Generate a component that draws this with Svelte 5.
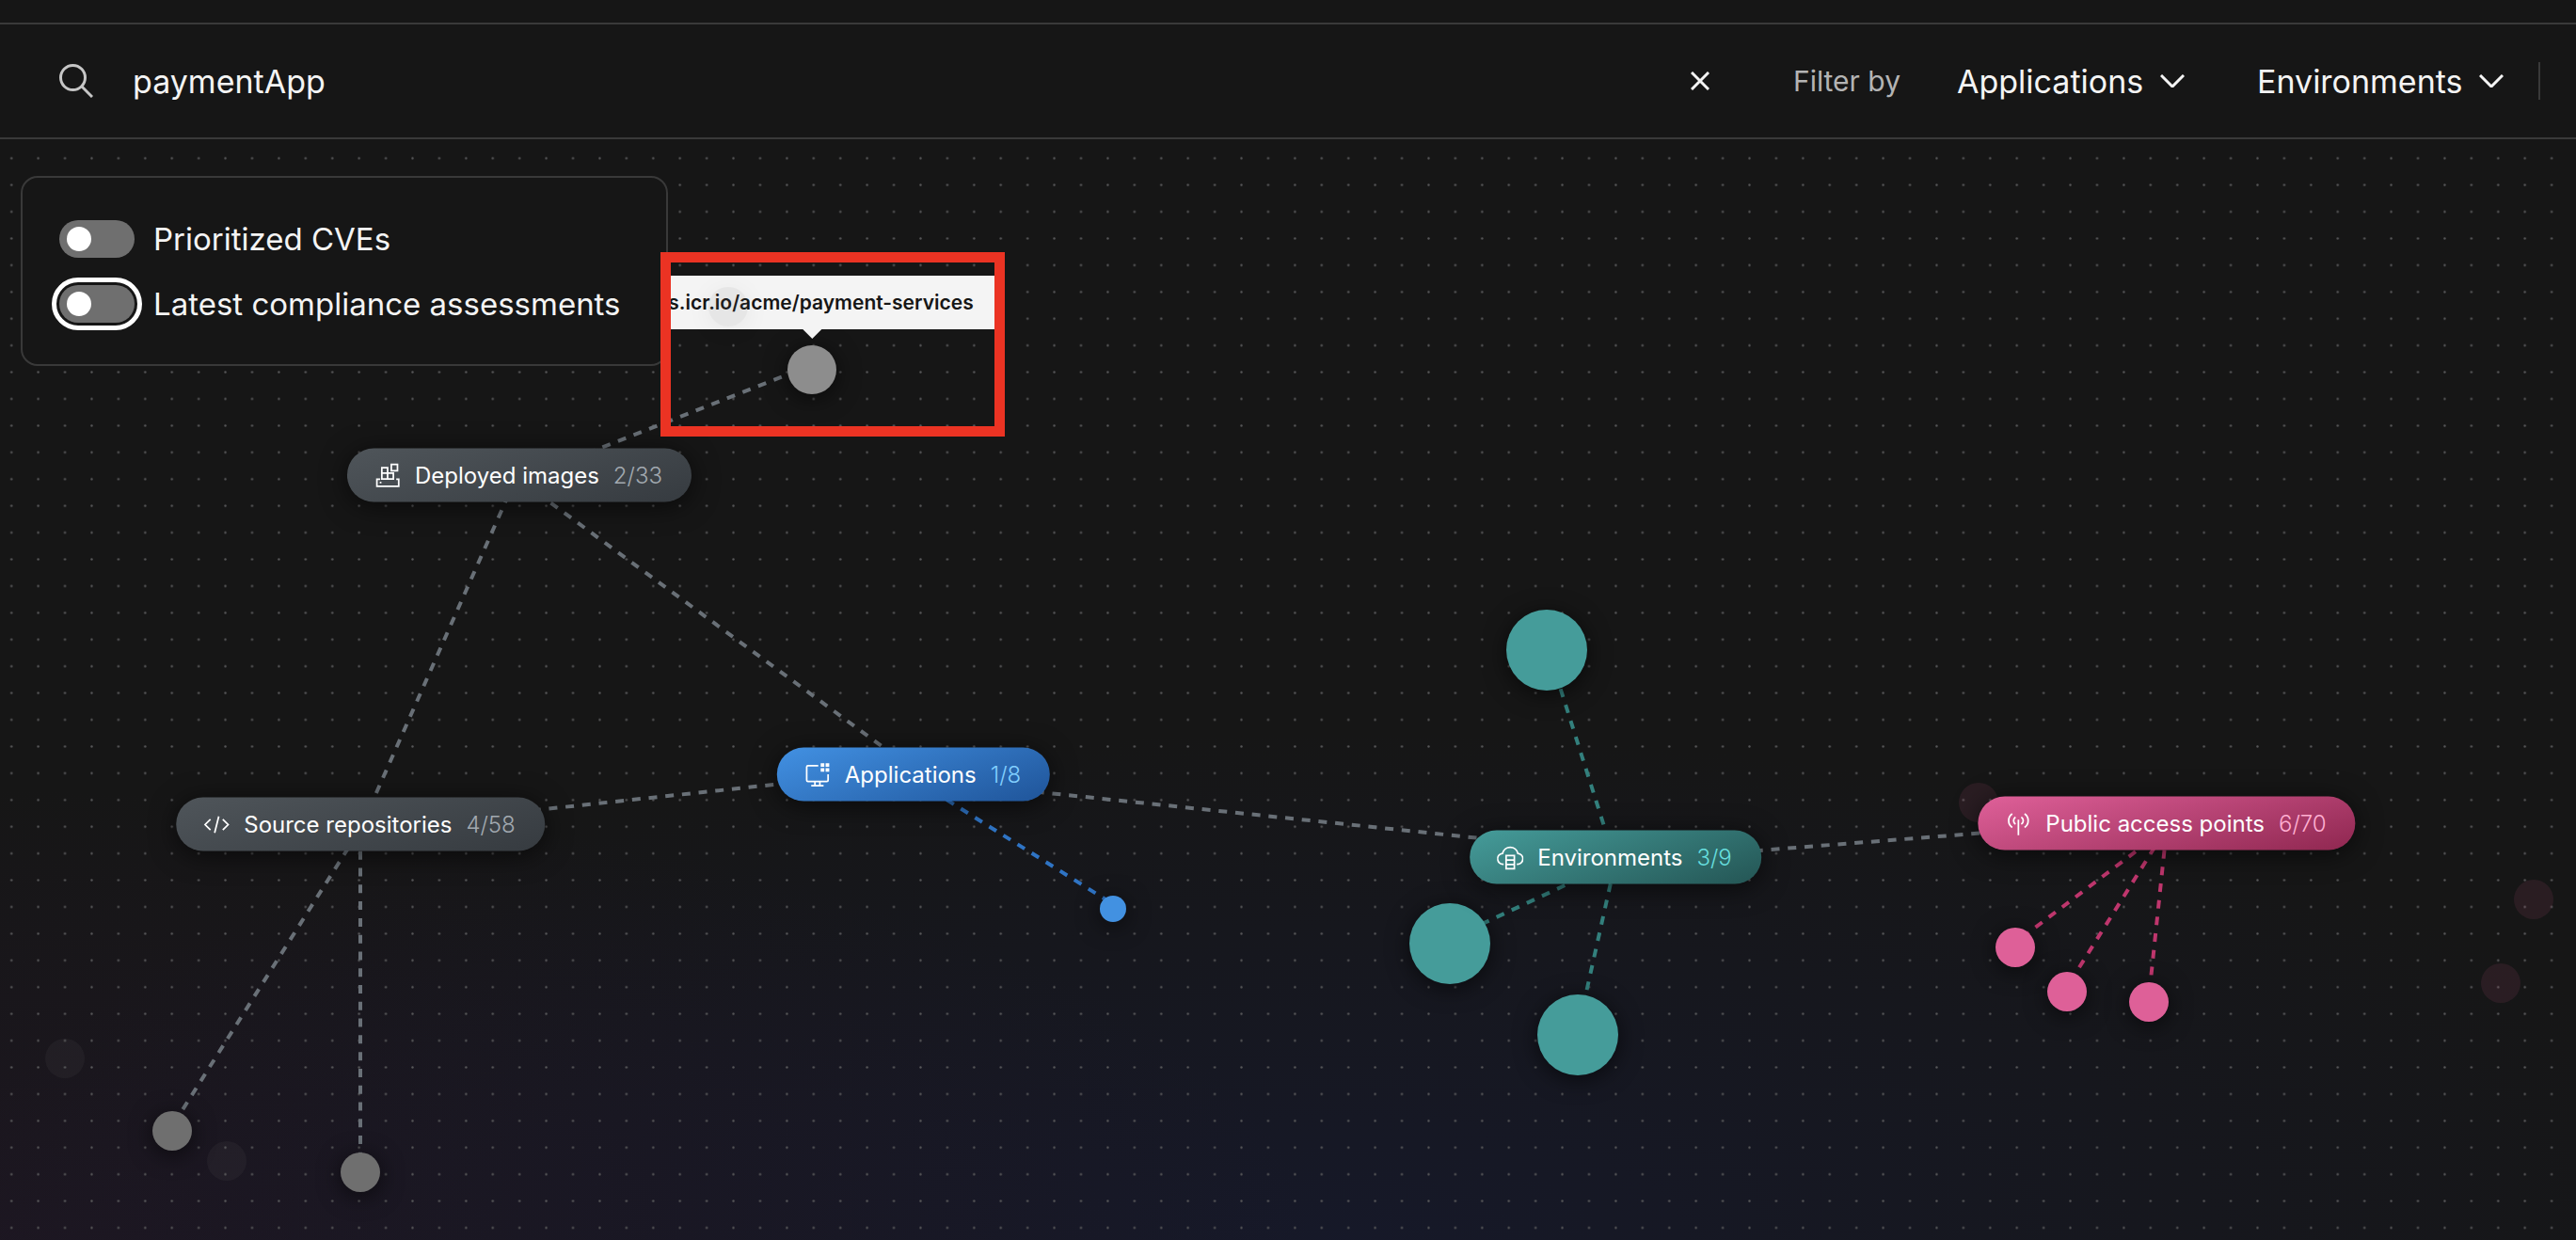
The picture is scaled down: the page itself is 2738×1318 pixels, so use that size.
<script lang="ts">
  let query = $state('paymentApp');
  let prioritized = $state(false);
  let compliance = $state(false);

  // Hub positions on the topology canvas
  const hubs = [
    { id: 'images', label: 'Deployed images', count: '2/33', tone: 'slate', x: 552, y: 357 },
    { id: 'source', label: 'Source repositories', count: '4/58', tone: 'slate', x: 383, y: 728 },
    { id: 'apps', label: 'Applications', count: '1/8', tone: 'blue', x: 971, y: 675 },
    { id: 'envs', label: 'Environments', count: '3/9', tone: 'teal', x: 1717, y: 763 },
    { id: 'access', label: 'Public access points', count: '6/70', tone: 'pink', x: 2303, y: 727 }
  ];

  const nodes = [
    { x: 863, y: 245, r: 26, tone: 'silver' },
    { x: 183, y: 1054, r: 21, tone: 'grey' },
    { x: 383, y: 1098, r: 21, tone: 'grey' },
    { x: 1183, y: 818, r: 14, tone: 'blue' },
    { x: 1644, y: 543, r: 43, tone: 'teal' },
    { x: 1541, y: 855, r: 43, tone: 'teal' },
    { x: 1677, y: 952, r: 43, tone: 'teal' },
    { x: 2142, y: 859, r: 21, tone: 'pink' },
    { x: 2197, y: 906, r: 21, tone: 'pink' },
    { x: 2284, y: 917, r: 21, tone: 'pink' }
  ];

  const faded = [
    { x: 69, y: 977, tone: 'grey' },
    { x: 241, y: 1086, tone: 'grey' },
    { x: 2103, y: 705, tone: 'pink' },
    { x: 2693, y: 808, tone: 'pink' },
    { x: 2658, y: 897, tone: 'pink' }
  ];

  // Links leave a hub just below its centre and arrive just above the target's
  const ANCHOR = 5;
  const links = [
    { a: hubs[0], b: nodes[0], tone: 'grey' },
    { a: hubs[0], b: hubs[2], tone: 'grey' },
    { a: hubs[1], b: hubs[0], tone: 'grey' },
    { a: hubs[1], b: nodes[1], tone: 'grey' },
    { a: hubs[1], b: nodes[2], tone: 'grey' },
    { a: hubs[1], b: hubs[2], tone: 'grey' },
    { a: hubs[2], b: hubs[3], tone: 'grey' },
    { a: hubs[3], b: hubs[4], tone: 'grey' },
    { a: hubs[2], b: nodes[3], tone: 'blue' },
    { a: hubs[3], b: nodes[4], tone: 'teal' },
    { a: hubs[3], b: nodes[5], tone: 'teal' },
    { a: hubs[3], b: nodes[6], tone: 'teal' },
    { a: hubs[4], b: nodes[7], tone: 'pink' },
    { a: hubs[4], b: nodes[8], tone: 'pink' },
    { a: hubs[4], b: nodes[9], tone: 'pink' }
  ];
</script>

<div class="page">
  <header class="toolbar">
    <svg class="search-icon" viewBox="0 0 36 36" aria-hidden="true">
      <circle cx="14.5" cy="14.5" r="13" />
      <path d="M24 24L35 35" />
    </svg>
    <input class="search" type="text" aria-label="Search" bind:value={query} />
    <button class="clear" type="button" aria-label="Clear search" onclick={() => (query = '')}>
      <svg viewBox="0 0 20 20" aria-hidden="true"><path d="M1 1L19 19M19 1L1 19" /></svg>
    </button>
    <span class="filter-label">Filter by</span>
    <div class="dropdown">
      <select aria-label="Applications"><option>Applications</option></select>
      <svg viewBox="0 0 26 14" aria-hidden="true"><path d="M1 1L13 13L25 1" /></svg>
    </div>
    <div class="dropdown">
      <select aria-label="Environments"><option>Environments</option></select>
      <svg viewBox="0 0 26 14" aria-hidden="true"><path d="M1 1L13 13L25 1" /></svg>
    </div>
    <span class="divider"></span>
  </header>

  <main class="canvas">
    <svg class="graph" aria-hidden="true">
      <defs>
        <pattern id="dots" x="-2" y="6" width="28.42" height="28.42" patternUnits="userSpaceOnUse">
          <circle cx="14.2" cy="14.2" r="1.2" />
        </pattern>
      </defs>
      <rect width="100%" height="100%" fill="url(#dots)" />
      {#each links as l}
        <line
          class="link {l.tone}"
          x1={l.a.x}
          y1={l.a.y + ANCHOR}
          x2={l.b.x}
          y2={l.b.y - ANCHOR}
          stroke-dasharray="9 8.78"
          stroke-dashoffset="-6"
        />
      {/each}
      {#each nodes as n}
        <circle class="node {n.tone}" cx={n.x} cy={n.y} r={n.r} />
      {/each}
      {#each faded as n}
        <circle class="faded {n.tone}" cx={n.x} cy={n.y} r="21" />
      {/each}
    </svg>

    {#each hubs as hub}
      <button class="hub {hub.tone}" type="button" style="left: {hub.x}px; top: {hub.y}px">
        <svg class="hub-icon" viewBox="0 0 32 32" aria-hidden="true">
          {#if hub.id === 'images'}
            <path d="M20.5 2.5H28V10H20.5ZM9 6.5H16V20H9ZM9 13H23V20H9ZM7 20.5H3V29H29.5V20.5H26.5" />
            <path d="M6.5 24.5H8.5" />
          {:else if hub.id === 'source'}
            <path d="M8.5 9.5L2 16L8.5 22.5M23.5 9.5L30 16L23.5 22.5M18.6 6L13.6 26" />
          {:else if hub.id === 'apps'}
            <path d="M17 5H4.5Q3 5 3 6.5V22.5Q3 24 4.5 24H27.5Q29 24 29 22.5V15.5M13 24V29M19 24V29M8.5 29.3H23.5" />
            <path class="solid" d="M20 2H24.4V6.4H20ZM26 2H30.4V6.4H26ZM20 8H24.4V12.4H20ZM26 8H30.4V12.4H26Z" />
          {:else if hub.id === 'envs'}
            <path d="M8 24H7.5A6.5 6.5 0 0 1 6.7 11A9.5 9.5 0 0 1 25.3 11A6.5 6.5 0 0 1 24.5 24H24" />
            <path d="M11 13.5H21V29.5H11ZM11 19H21M11 24.3H21" />
          {:else}
            <path d="M8.5 4A10 10 0 0 0 8.5 20.5M23.5 4A10 10 0 0 1 23.5 20.5M12.5 8A5 5 0 0 0 12.5 16.5M19.5 8A5 5 0 0 1 19.5 16.5M16 11V30" />
          {/if}
        </svg>
        <span>{hub.label}</span>
        <span class="count">{hub.count}</span>
      </button>
    {/each}

    <div class="tooltip" role="tooltip">us.icr.io/acme/payment-services</div>
    <span class="tooltip-ghost"></span>

    <section class="panel">
      <label class="toggle">
        <input type="checkbox" role="switch" bind:checked={prioritized} />
        <span>Prioritized CVEs</span>
      </label>
      <label class="toggle focused">
        <input type="checkbox" role="switch" bind:checked={compliance} />
        <span>Latest compliance assessments</span>
      </label>
    </section>

    <div class="highlight"></div>
  </main>
</div>

<style>
  :global(body) {
    background: #161616;
  }

  .page {
    box-sizing: border-box;
    display: flex;
    flex-direction: column;
    min-height: 100vh;
    padding-top: 24px;
    overflow: hidden;
    background: #161616;
    color: #f4f4f4;
    font-family: Inter, 'Noto Sans', 'Liberation Sans', sans-serif;
  }

  button,
  select,
  input {
    margin: 0;
    padding: 0;
    border: 0;
    background: none;
    color: inherit;
    font: inherit;
  }

  svg {
    fill: none;
    stroke: currentColor;
    stroke-width: 2px;
  }

  .toolbar {
    display: flex;
    align-items: center;
    height: 120px;
    padding: 0 38px 0 63px;
    border-top: 2px solid #393939;
    border-bottom: 2px solid #393939;
    font-size: 34px;
  }

  .search-icon {
    flex: none;
    width: 36px;
    height: 36px;
    color: #c6c6c6;
    stroke-width: 3px;
  }

  .search {
    flex: 1;
    min-width: 0;
    height: 64px;
    margin-left: 42px;
    outline: none;
  }

  .clear {
    display: flex;
    padding: 10px;
    margin-right: 79px;
  }

  .clear svg {
    width: 20px;
    height: 20px;
    stroke-width: 3px;
  }

  .filter-label {
    margin-right: 60px;
    color: #b4b4b4;
    font-size: 30px;
    white-space: nowrap;
  }

  .dropdown {
    display: flex;
    align-items: center;
    gap: 17px;
  }

  .dropdown + .dropdown {
    margin-left: 77px;
  }

  .dropdown select {
    appearance: none;
    height: 64px;
  }

  .dropdown svg {
    width: 26px;
    height: 14px;
    stroke-width: 3px;
  }

  .divider {
    width: 2px;
    height: 40px;
    margin-left: 37px;
    background: #393939;
  }

  .canvas {
    position: relative;
    flex: 1;
    min-height: 1170px;
    background:
      radial-gradient(ellipse 1400px 480px at 0% 100%, rgba(46, 24, 62, 0.27), rgba(46, 24, 62, 0)),
      radial-gradient(ellipse 1500px 540px at 52% 100%, rgba(22, 28, 66, 0.42), rgba(22, 28, 66, 0));
  }

  .graph {
    position: absolute;
    inset: 0;
    width: 100%;
    height: 100%;
    stroke: none;
  }

  .graph pattern circle {
    fill: #58585a;
  }

  .link {
    stroke-width: 4px;
  }
  .link.grey {
    stroke: #697077;
  }
  .link.blue {
    stroke: #2f74c4;
  }
  .link.teal {
    stroke: #33807d;
  }
  .link.pink {
    stroke: #bf366d;
  }

  .node {
    filter: drop-shadow(0 4px 12px rgba(0, 0, 0, 0.6));
  }
  .node.silver {
    fill: #8d8d8d;
  }
  .node.grey,
  .faded.grey {
    fill: #6f6f6f;
  }
  .node.blue {
    fill: #4291e1;
  }
  .node.teal {
    fill: #459c9a;
  }
  .node.pink,
  .faded.pink {
    fill: #de6098;
  }

  .faded {
    opacity: 0.1;
  }

  .hub {
    position: absolute;
    display: flex;
    align-items: center;
    gap: 15px;
    height: 57px;
    padding: 0 31px 0 29px;
    border-radius: 29px;
    color: #ffffff;
    font-size: 24px;
    white-space: nowrap;
    transform: translate(-50%, -50%);
    box-shadow: 0 4px 28px rgba(0, 0, 0, 0.6);
  }

  .hub.slate {
    background: linear-gradient(165deg, #4f555a, #363b40);
  }
  .hub.blue {
    background: linear-gradient(160deg, #4291e3, #1f5499);
  }
  .hub.teal {
    background: linear-gradient(160deg, #459c9a, #245554);
  }
  .hub.pink {
    background: linear-gradient(165deg, #df6099, #8f2750);
  }

  .hub-icon {
    width: 28px;
    height: 28px;
  }

  .hub-icon .solid {
    fill: currentColor;
    stroke: none;
  }

  .count {
    font-weight: 300;
  }

  .slate .count {
    color: #a2a9b0;
  }
  .blue .count {
    color: #82cfff;
  }
  .teal .count {
    color: #66dede;
  }
  .pink .count {
    color: #ffafd2;
  }

  .tooltip {
    position: absolute;
    left: 863px;
    top: 145px;
    display: flex;
    align-items: center;
    height: 57px;
    padding: 0 23px 0 29px;
    background: #f4f4f4;
    color: #161616;
    font-size: 21px;
    font-weight: 600;
    white-space: nowrap;
    transform: translateX(-50%);
  }

  .tooltip::after {
    content: '';
    position: absolute;
    top: 100%;
    left: 50%;
    margin-left: -10px;
    border: 10px solid transparent;
    border-top-color: #f4f4f4;
    border-bottom-width: 0;
  }

  .tooltip-ghost {
    position: absolute;
    left: 753px;
    top: 157px;
    width: 42px;
    height: 42px;
    border-radius: 50%;
    background: rgba(111, 111, 111, 0.1);
    box-shadow: 0 4px 28px rgba(0, 0, 0, 0.06);
  }

  .panel {
    position: absolute;
    left: 22px;
    top: 39px;
    display: flex;
    flex-direction: column;
    gap: 29px;
    padding: 45px 48px 44px 39px;
    border: 2px solid #393939;
    border-radius: 18px;
    background: #161616;
    font-size: 33px;
  }

  .toggle {
    display: flex;
    align-items: center;
    gap: 20px;
    height: 40px;
    white-space: nowrap;
  }

  .toggle input {
    appearance: none;
    display: flex;
    align-items: center;
    width: 80px;
    height: 40px;
    padding: 0 8px;
    box-sizing: border-box;
    border-radius: 20px;
    background: #6f6f6f;
  }

  .toggle input::before {
    content: '';
    width: 26px;
    height: 26px;
    border-radius: 50%;
    background: #ffffff;
  }

  .toggle input:checked {
    justify-content: flex-end;
    background: #24a148;
  }

  .toggle.focused input {
    outline: 5px solid #ffffff;
    outline-offset: 3px;
  }

  .highlight {
    position: absolute;
    left: 702px;
    top: 120px;
    box-sizing: border-box;
    width: 366px;
    height: 196px;
    border: 11px solid #eb3323;
    pointer-events: none;
  }
</style>
